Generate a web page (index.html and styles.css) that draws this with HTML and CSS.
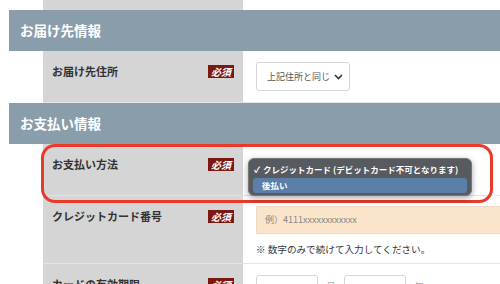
FILE: index.html
```html
<!DOCTYPE html>
<html lang="ja">
<head>
  <meta charset="UTF-8">
  <meta name="viewport" content="width=device-width, initial-scale=1.0">
  <title>ご注文手続き</title>
  <link rel="stylesheet" href="styles.css">
</head>
<body>
  <div class="form">
    <div class="row row-cut">
      <div class="label"></div>
      <div class="field"></div>
    </div>

    <div class="section-head">お届け先情報</div>
    <div class="row row-address">
      <div class="label">
        <span>お届け先住所</span>
        <span class="badge">必須</span>
      </div>
      <div class="field">
        <div class="select">上記住所と同じ
          <svg width="9" height="6" viewBox="0 0 9 6"><path d="M1 1l3.5 3.5L8 1" fill="none" stroke="#333" stroke-width="1.6"/></svg>
        </div>
      </div>
    </div>

    <div class="section-head">お支払い情報</div>
    <div class="row row-pay">
      <div class="label">
        <span>お支払い方法</span>
        <span class="badge">必須</span>
      </div>
      <div class="field"></div>
      <div class="highlight"></div>
      <div class="dropdown">
        <div class="option"><span class="check">✓</span>クレジットカード (デビットカード不可となります)</div>
        <div class="option selected">後払い</div>
      </div>
    </div>

    <div class="row row-card">
      <div class="label">
        <span>クレジットカード番号</span>
        <span class="badge">必須</span>
      </div>
      <div class="field">
        <div class="input-card">例）4111xxxxxxxxxxxx</div>
        <p class="note">※ 数字のみで続けて入力してください。</p>
      </div>
    </div>

    <div class="row row-expiry">
      <div class="label">
        <span>カードの有効期限</span>
        <span class="badge">必須</span>
      </div>
      <div class="field expiry">
        <div class="box"></div>
        <span class="sep">月</span>
        <div class="box"></div>
        <span class="sep">年</span>
      </div>
    </div>
  </div>
</body>
</html>
```

FILE: styles.css
```css
body {
  margin: 0;
  background: #fff;
  font-family: "Noto Sans CJK JP", "Noto Sans", sans-serif;
  color: #333;
  overflow: hidden;
}
.form {
  margin-left: 9px;
}
.section-head {
  height: 41px;
  line-height: 40px;
  background: #8a9dab;
  color: #fff;
  font-size: 13.5px;
  font-weight: 700;
  padding-left: 11px;
}
.row {
  display: flex;
  padding-left: 34px;
  position: relative;
}
.label {
  width: 200px;
  flex: none;
  box-sizing: border-box;
  background: #d5d5d5;
  display: flex;
  justify-content: space-between;
  align-items: flex-start;
  padding: 12px 9px 0 9px;
  font-size: 11px;
  font-weight: 700;
  line-height: 16px;
  border-bottom: 1px solid #e2e4ec;
}
.field {
  flex: 1;
  padding: 11px 0 0 13px;
  border-bottom: 1px solid #e2e4ec;
}
.row-cut {
  height: 10px;
}
.row-cut .label,
.row-cut .field {
  padding: 0;
  border: none;
}
.row-address {
  height: 52px;
}
.row-pay {
  height: 52px;
}
.row-card {
  height: 68px;
}
.row-expiry {
  height: 40px;
}
.badge {
  margin-top: 2px;
  background: #7b1812;
  color: #fff;
  font-size: 10px;
  line-height: 13px;
  padding: 0 3px;
  font-style: italic;
}
.select {
  display: flex;
  align-items: center;
  justify-content: space-between;
  width: 94px;
  height: 29px;
  box-sizing: border-box;
  padding: 0 6px 0 10px;
  border: 1px solid #d6d6d6;
  border-radius: 3px;
  font-size: 9px;
  color: #555;
}
.highlight {
  position: absolute;
  left: 32px;
  top: 0;
  width: 452px;
  height: 59px;
  box-sizing: border-box;
  border: 3px solid #e8392a;
  border-radius: 14px;
  z-index: 2;
}
.dropdown {
  position: absolute;
  left: 239px;
  top: 14px;
  width: 224px;
  height: 38px;
  box-sizing: border-box;
  padding: 3px 4px;
  background: #575a5e;
  border: 1px solid #777;
  border-radius: 6px;
  box-shadow: 0 2px 6px rgba(0,0,0,0.35);
  z-index: 3;
  color: #fff;
  font-size: 8.5px;
  font-weight: 700;
}
.option {
  height: 15px;
  line-height: 15px;
  padding-left: 10px;
  position: relative;
  white-space: nowrap;
  overflow: hidden;
}
.check {
  position: absolute;
  left: 1px;
}
.option.selected {
  background: #5b7fa8;
  border-radius: 3px;
  margin-top: 1px;
  padding-left: 9px;
}
.input-card {
  height: 28px;
  box-sizing: border-box;
  margin-top: -1px;
  background: #fae5cb;
  border: 1px solid #eadac4;
  border-right: none;
  padding-left: 8px;
  line-height: 26px;
  font-size: 9px;
  color: #888;
}
.note {
  margin: 8px 0 0;
  font-size: 9.6px;
  color: #333;
}
.expiry {
  display: flex;
  align-items: flex-start;
  gap: 8px;
  padding-top: 11px;
}
.box {
  width: 60px;
  height: 30px;
  border: 1px solid #d6d6d6;
  border-radius: 3px;
}
.sep {
  font-size: 10px;
  color: #aaa;
  margin-top: 4px;
}
```
